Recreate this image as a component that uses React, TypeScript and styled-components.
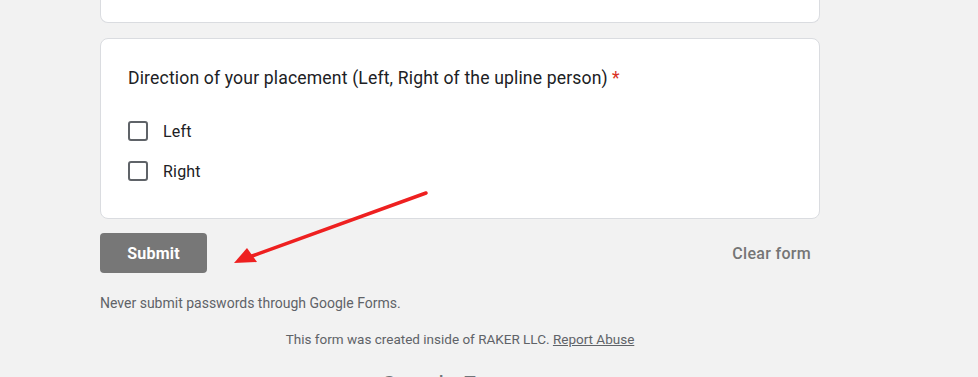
import styled, { createGlobalStyle } from "styled-components";

const GlobalStyle = createGlobalStyle`
  html, body {
    margin: 0;
    padding: 0;
    background: #f2f2f2;
    font-family: Roboto, "Liberation Sans", Arial, sans-serif;
    overflow: hidden;
  }
`;

const Page = styled.div`
  position: relative;
  width: 978px;
  height: 377px;
  overflow: hidden;
`;

const Column = styled.div`
  width: 720px;
  margin-left: 100px;
  display: flex;
  flex-direction: column;
`;

interface CardProps {
  clipped?: boolean;
}

const Card = styled.div<CardProps>`
  background: #fff;
  border: 1px solid #dadce0;
  border-top: ${(p) => (p.clipped ? "none" : "1px solid #dadce0")};
  border-radius: ${(p) => (p.clipped ? "0 0 8px 8px" : "8px")};
  height: ${(p) => (p.clipped ? "23px" : "auto")};
  box-sizing: border-box;
  padding: ${(p) => (p.clipped ? "0" : "27px")};
  margin-bottom: 15px;
`;

const Question = styled.div`
  font-size: 17.6px;
  line-height: 24px;
  color: #202124;
  letter-spacing: 0.15px;
`;

const Star = styled.span`
  color: #d93025;
  margin-left: 4px;
`;

const Options = styled.div`
  margin-top: 21px;
  display: flex;
  flex-direction: column;
`;

const Option = styled.label`
  display: flex;
  align-items: center;
  height: 40px;
  font-size: 16px;
  color: #202124;
  letter-spacing: 0.2px;
`;

const Box = styled.span`
  width: 20px;
  height: 20px;
  box-sizing: border-box;
  border: 2px solid #5f6368;
  border-radius: 3px;
  margin-right: 15px;
`;

const Actions = styled.div`
  display: flex;
  justify-content: space-between;
  align-items: center;
  margin-top: -1px;
`;

const SubmitButton = styled.button`
  width: 107px;
  height: 40px;
  border: none;
  border-radius: 4px;
  background: #777777;
  color: #fff;
  font-family: Roboto, "Liberation Sans", Arial, sans-serif;
  font-weight: 700;
  font-size: 16px;
  letter-spacing: 0.2px;
`;

const ClearButton = styled.button`
  background: none;
  border: none;
  padding: 0 9px 0 0;
  color: #757575;
  font-family: Roboto, "Liberation Sans", Arial, sans-serif;
  font-weight: 500;
  font-size: 16px;
  letter-spacing: 0.3px;
`;

const Note = styled.div`
  margin-top: 20px;
  font-size: 14px;
  line-height: 20px;
  color: #5f6368;
`;

const Footer = styled.div`
  margin-top: 16px;
  text-align: center;
  font-size: 13.5px;
  line-height: 20px;
  color: #5f6368;
  a {
    color: #5f6368;
    text-decoration: underline;
  }
`;

const Logo = styled.div`
  margin-top: 21px;
  text-align: center;
  font-size: 24px;
  line-height: 30px;
  color: #70757a;
  padding-right: 8px;
`;

const ArrowOverlay = styled.svg`
  position: absolute;
  left: 0;
  top: 0;
  pointer-events: none;
`;

export default function App() {
  return (
    <Page>
      <GlobalStyle />
      <Column>
        <Card clipped />
        <Card>
          <Question>
            Direction of your placement (Left, Right of the upline person)
            <Star>*</Star>
          </Question>
          <Options>
            <Option>
              <Box />
              Left
            </Option>
            <Option>
              <Box />
              Right
            </Option>
          </Options>
        </Card>
        <Actions>
          <SubmitButton>Submit</SubmitButton>
          <ClearButton>Clear form</ClearButton>
        </Actions>
        <Note>Never submit passwords through Google Forms.</Note>
        <Footer>
          This form was created inside of RAKER LLC. <a>Report Abuse</a>
        </Footer>
        <Logo>Google Forms</Logo>
      </Column>
      <ArrowOverlay width="978" height="377">
        <line x1="426" y1="193" x2="252" y2="256" stroke="#ee2020" strokeWidth="3.5" strokeLinecap="round" />
        <polygon points="234,263 247,248 257,262" fill="#ee2020" />
      </ArrowOverlay>
    </Page>
  );
}
